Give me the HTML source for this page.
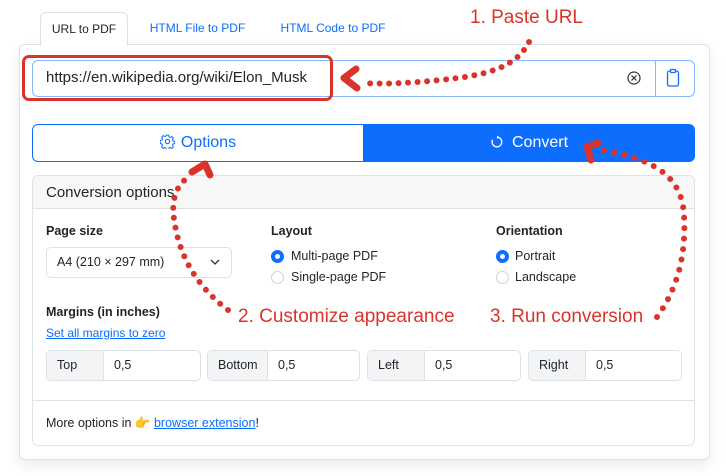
<!DOCTYPE html>
<html><head><meta charset="utf-8"><style>
*{box-sizing:border-box;margin:0;padding:0}
body{width:726px;height:476px;background:#fff;font-family:"Liberation Sans",sans-serif;position:relative;overflow:hidden;color:#212529}
.abs{position:absolute}
.tab{top:12px;height:33px;font-size:12px;line-height:33px;text-align:center;color:#0d6efd}
.card{left:19px;top:44px;width:691px;height:416px;border:1px solid #dee2e6;border-radius:6px;box-shadow:0 6px 14px rgba(0,0,0,.08);background:#fff}
.lbl{font-size:12.5px;font-weight:bold}
.radio{width:13px;height:13px;border-radius:50%;border:1px solid #ced4da;display:inline-block}
.radio.on{border:4px solid #0d6efd}
.rt{font-size:12.5px}
.mg{top:350px;height:31px;border:1px solid #dee2e6;border-radius:5px;display:flex;font-size:12.5px;overflow:hidden}
.mg span{background:#f3f4f6;border-right:1px solid #dee2e6;padding:0 0 0 10px;line-height:29px}
.mg b{font-weight:normal;padding-left:10px;line-height:29px}
.red{color:#d9342b;font-size:19px}
</style></head><body>
<div class="abs tab" style="left:40px;width:88px;border:1px solid #dee2e6;border-bottom:none;border-radius:6px 6px 0 0;background:#fff;color:#212529;z-index:2;height:34px">URL to PDF</div>
<div class="abs tab" style="left:140px;width:115px">HTML File to PDF</div>
<div class="abs tab" style="left:272px;width:122px">HTML Code to PDF</div>
<div class="abs card"></div>
<div class="abs" style="left:32px;top:60px;width:663px;height:37px;border:1px solid #86b7fe;border-radius:6px"></div>
<div class="abs" style="left:655px;top:60px;width:1px;height:37px;background:#86b7fe"></div>
<div class="abs" style="left:46px;top:69px;font-size:15px">https://en.wikipedia.org/wiki/Elon_Musk</div>
<div class="abs" style="left:22px;top:55px;width:311px;height:46px;border:3px solid #d9342b;border-radius:7px"></div>
<svg class="abs" style="left:626px;top:70px" width="16" height="16" viewBox="0 0 16 16"><circle cx="8" cy="8" r="6" fill="none" stroke="#333" stroke-width="1.2"/><path d="M5.5 5.5l5 5M10.5 5.5l-5 5" stroke="#333" stroke-width="1.2"/></svg>
<svg class="abs" style="left:666px;top:68px" width="14" height="20" viewBox="0 0 14 20"><rect x="1.5" y="3" width="11" height="15" rx="2" fill="none" stroke="#0d6efd" stroke-width="1.3"/><rect x="4.5" y="1.5" width="5" height="3" rx="1" fill="#fff" stroke="#0d6efd" stroke-width="1.3"/></svg>
<div class="abs" style="left:32px;top:124px;width:332px;height:38px;border:1px solid #0d6efd;border-radius:6px 0 0 6px;color:#0d6efd;font-size:16px;line-height:36px;text-align:center"><svg width="15" height="15" viewBox="0 0 16 16" style="vertical-align:-2px;margin-right:6px"><circle cx="8" cy="8" r="2.3" fill="none" stroke="#0d6efd" stroke-width="1.2"/><path d="M6.8 1.2h2.4l.4 1.9 1.3.6 1.7-1 1.7 1.7-1 1.7.6 1.3 1.9.4v2.4l-1.9.4-.6 1.3 1 1.7-1.7 1.7-1.7-1-1.3.6-.4 1.9H6.8l-.4-1.9-1.3-.6-1.7 1-1.7-1.7 1-1.7-.6-1.3-1.9-.4V6.8l1.9-.4.6-1.3-1-1.7 1.7-1.7 1.7 1 1.3-.6z" fill="none" stroke="#0d6efd" stroke-width="1.1" stroke-linejoin="round"/></svg>Options</div>
<div class="abs" style="left:363px;top:124px;width:332px;height:38px;background:#0d6efd;border-radius:0 6px 6px 0;color:#fff;font-size:16px;line-height:38px;text-align:center"><svg width="14" height="14" viewBox="0 0 16 16" style="vertical-align:-2px;margin-right:8px"><path d="M8 2.5A5.5 5.5 0 1 1 3 5.5" fill="none" stroke="#fff" stroke-width="1.5"/><path d="M8 0.5v4l2.5-2z" fill="#fff"/></svg>Convert</div>
<div class="abs" style="left:32px;top:175px;width:663px;height:271px;border:1px solid #dee2e6;border-radius:6px"></div>
<div class="abs" style="left:33px;top:176px;width:661px;height:33px;background:#f7f7f7;border-bottom:1px solid #dee2e6;border-radius:5px 5px 0 0;font-size:15px;line-height:33px;padding-left:13px">Conversion options</div>
<div class="abs lbl" style="left:46px;top:224px">Page size</div>
<div class="abs" style="left:46px;top:247px;width:186px;height:31px;border:1px solid #dee2e6;border-radius:5px;font-size:12.5px;line-height:29px;padding-left:10px">A4 (210 × 297 mm)<svg width="10" height="7" viewBox="0 0 10 7" style="position:absolute;left:163px;top:11px"><path d="M1 1l4 4 4-4" fill="none" stroke="#333" stroke-width="1.3"/></svg></div>
<div class="abs lbl" style="left:271px;top:224px">Layout</div>
<div class="abs" style="left:271px;top:250px"><span class="radio on"></span></div><div class="abs rt" style="left:291px;top:249px">Multi-page PDF</div>
<div class="abs" style="left:271px;top:271px"><span class="radio"></span></div><div class="abs rt" style="left:291px;top:270px">Single-page PDF</div>
<div class="abs lbl" style="left:496px;top:224px">Orientation</div>
<div class="abs" style="left:496px;top:250px"><span class="radio on"></span></div><div class="abs rt" style="left:515px;top:249px">Portrait</div>
<div class="abs" style="left:496px;top:271px"><span class="radio"></span></div><div class="abs rt" style="left:515px;top:270px">Landscape</div>
<div class="abs lbl" style="left:46px;top:305px">Margins (in inches)</div>
<div class="abs" style="left:46px;top:326px;font-size:12px;color:#0d6efd;text-decoration:underline">Set all margins to zero</div>
<div class="abs mg" style="left:46px;width:155px"><span style="width:57px">Top</span><b>0,5</b></div>
<div class="abs mg" style="left:207px;width:153px"><span style="width:60px">Bottom</span><b>0,5</b></div>
<div class="abs mg" style="left:367px;width:154px"><span style="width:57px">Left</span><b>0,5</b></div>
<div class="abs mg" style="left:528px;width:154px"><span style="width:57px">Right</span><b>0,5</b></div>
<div class="abs" style="left:33px;top:400px;width:661px;height:1px;background:#dee2e6"></div>
<div class="abs" style="left:46px;top:416px;font-size:12.5px">More options in 👉 <span style="color:#0d6efd;text-decoration:underline">browser extension</span>!</div>
<div class="abs red" style="left:470px;top:7px">1. Paste URL</div>
<div class="abs red" style="left:238px;top:306px">2. Customize appearance</div>
<div class="abs red" style="left:490px;top:306px">3. Run conversion</div>
<svg class="abs" style="left:0;top:0" width="726" height="476">
<g fill="none" stroke="#d9342b" stroke-linecap="round">
<path d="M529 42 C515 70 480 76 440 80 S380 84 362 83" stroke-width="6" stroke-dasharray="0 9.5"/>
<path d="M356 69 L344 78 L357 88" stroke-width="7" stroke-linejoin="round"/>
<path d="M228 310 C195 285 180 255 175 225 C170 200 176 185 190 176" stroke-width="6" stroke-dasharray="0 10"/>
<path d="M192 172 L205 164 L210 175" stroke-width="7" stroke-linejoin="round"/>
<path d="M657 317 C680 285 686 250 684 215 C682 180 660 160 602 150" stroke-width="6" stroke-dasharray="0 10.5"/>
<path d="M598 143 L587 147 L591 160" stroke-width="7" stroke-linejoin="round"/>
</g></svg>
</body></html>
